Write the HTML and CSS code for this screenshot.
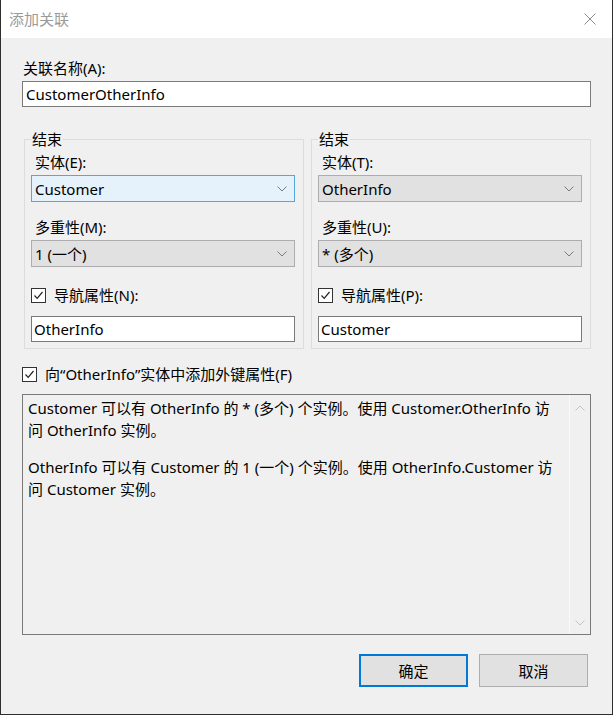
FILE: index.html
```html
<!DOCTYPE html>
<html lang="zh-CN">
<head>
<meta charset="utf-8">
<title>添加关联</title>
<link rel="stylesheet" href="styles.css">
</head>
<body>
<div class="window">
  <div class="titlebar">
    <span class="title">添加关联</span>
    <svg class="close" width="12" height="12" viewBox="0 0 12 12"><path d="M0.5 0.5 L11.5 11.5 M11.5 0.5 L0.5 11.5" stroke="#8c8c8c" stroke-width="1" fill="none"/></svg>
  </div>
  <div class="body">
    <div class="lbl lbl-top">关联名称(A):</div>
    <div class="textbox">CustomerOtherInfo</div>

    <div class="ends">
      <fieldset class="group">
        <legend>结束</legend>
        <div class="lbl">实体(E):</div>
        <div class="combo focused"><span>Customer</span><svg class="chev" width="10" height="6" viewBox="0 0 10 6"><path d="M0.5 0.5 L5 5 L9.5 0.5" stroke="#7a7a7a" fill="none"/></svg></div>
        <div class="lbl lbl-gap">多重性(M):</div>
        <div class="combo"><span>1 (一个)</span><svg class="chev" width="10" height="6" viewBox="0 0 10 6"><path d="M0.5 0.5 L5 5 L9.5 0.5" stroke="#7a7a7a" fill="none"/></svg></div>
        <div class="check check-nav"><span class="box"><svg width="11" height="11" viewBox="0 0 11 11"><path d="M1.5 5.5 L4.2 8.3 L9.5 2" stroke="#222" stroke-width="1.2" fill="none"/></svg></span><span>导航属性(N):</span></div>
        <div class="textbox small">OtherInfo</div>
      </fieldset>
      <fieldset class="group">
        <legend>结束</legend>
        <div class="lbl">实体(T):</div>
        <div class="combo"><span>OtherInfo</span><svg class="chev" width="10" height="6" viewBox="0 0 10 6"><path d="M0.5 0.5 L5 5 L9.5 0.5" stroke="#7a7a7a" fill="none"/></svg></div>
        <div class="lbl lbl-gap">多重性(U):</div>
        <div class="combo"><span>* (多个)</span><svg class="chev" width="10" height="6" viewBox="0 0 10 6"><path d="M0.5 0.5 L5 5 L9.5 0.5" stroke="#7a7a7a" fill="none"/></svg></div>
        <div class="check check-nav"><span class="box"><svg width="11" height="11" viewBox="0 0 11 11"><path d="M1.5 5.5 L4.2 8.3 L9.5 2" stroke="#222" stroke-width="1.2" fill="none"/></svg></span><span>导航属性(P):</span></div>
        <div class="textbox small">Customer</div>
      </fieldset>
    </div>

    <div class="check check-fk"><span class="box"><svg width="11" height="11" viewBox="0 0 11 11"><path d="M1.5 5.5 L4.2 8.3 L9.5 2" stroke="#222" stroke-width="1.2" fill="none"/></svg></span><span>向“OtherInfo”实体中添加外键属性(F)</span></div>

    <div class="desc">
      <div class="desc-text">
        <p>Customer 可以有 OtherInfo 的 * (多个) 个实例。使用 Customer.OtherInfo 访<br>问 OtherInfo 实例。</p>
        <p>OtherInfo 可以有 Customer 的 1 (一个) 个实例。使用 OtherInfo.Customer 访<br>问 Customer 实例。</p>
      </div>
      <div class="scroll">
        <svg width="10" height="6" viewBox="0 0 10 6"><path d="M0.5 5.5 L5 1 L9.5 5.5" stroke="#c4c4c4" fill="none"/></svg>
        <svg width="10" height="6" viewBox="0 0 10 6"><path d="M0.5 0.5 L5 5 L9.5 0.5" stroke="#c4c4c4" fill="none"/></svg>
      </div>
    </div>

    <div class="buttons">
      <button class="btn default">确定</button>
      <button class="btn">取消</button>
    </div>
  </div>
</div>
</body>
</html>
```

FILE: styles.css
```css
* { box-sizing: border-box; }

html, body {
  margin: 0;
  padding: 0;
  background: #f0f0f0;
}

body {
  font-family: "Noto Sans", "Noto Sans CJK SC", sans-serif;
  font-size: 15px;
  color: #000;
}

.window {
  width: 613px;
  height: 715px;
  display: flex;
  flex-direction: column;
  border-left: 1px solid #2e2e2e;
  border-right: 1px solid #2e2e2e;
  border-bottom: 1px solid #2e2e2e;
  background: #f0f0f0;
}

.titlebar {
  height: 38px;
  flex: none;
  background: #fff;
  display: flex;
  align-items: center;
  justify-content: space-between;
  padding: 0 16px 0 8px;
}

.title {
  font-size: 15px;
  color: #9a9a9a;
  line-height: 20px;
}

.close { display: block; }

.body {
  flex: 1;
  display: flex;
  flex-direction: column;
  padding: 20px 21px 0 21px;
}

.lbl {
  font-size: 15px;
  line-height: 20px;
  height: 20px;
  margin-left: 4px;
}

.lbl-top {
  margin-left: 1px;
  margin-bottom: 3px;
}

.textbox {
  height: 26px;
  border: 1px solid #7a7a7a;
  background: #fff;
  line-height: 24px;
  padding-left: 3px;
  font-size: 15px;
  white-space: nowrap;
}

.textbox.small {
  margin-top: 11px;
  padding-left: 2px;
}

.ends {
  margin-top: 22px;
  padding-left: 2px;
  display: grid;
  grid-template-columns: 1fr 1fr;
  column-gap: 7px;
}

.group {
  margin: 0;
  min-width: 0;
  border: 1px solid #dcdcdc;
  padding: 3px 8px 6px 6px;
  display: flex;
  flex-direction: column;
}

.group legend {
  font-size: 15px;
  line-height: 20px;
  padding: 0 1px;
  margin-left: 0;
}

.lbl + .combo { margin-top: 3px; }
.lbl-gap { margin-top: 15px; }

.combo {
  height: 27px;
  border: 1px solid #adadad;
  background: #e1e1e1;
  display: flex;
  align-items: center;
  justify-content: space-between;
  padding: 0 7px 0 3px;
  font-size: 15px;
}

.combo.focused {
  background: #e5f1fb;
  border-color: #56a8dc;
}

.chev { display: block; flex: none; }

.check {
  display: flex;
  align-items: center;
  height: 20px;
  line-height: 20px;
  font-size: 15px;
}

.box {
  width: 15px;
  height: 15px;
  border: 1px solid #333;
  background: #fff;
  display: flex;
  align-items: center;
  justify-content: center;
  margin-right: 8px;
  flex: none;
}

.box svg { display: block; }

.check-nav { margin-top: 18px; }

.check-fk {
  margin-top: 15px;
  margin-left: 0;
}

.desc {
  margin-top: 10px;
  height: 241px;
  border: 1px solid #7a7a7a;
  background: #f0f0f0;
  display: flex;
}

.desc-text {
  flex: 1;
  padding: 2px 4px 0 5px;
  font-size: 15px;
  line-height: 22px;
  white-space: nowrap;
}

.desc-text p { margin: 0; }
.desc-text p + p { margin-top: 15px; }

.scroll {
  width: 21px;
  flex: none;
  border-left: 1px solid #fafafa;
  display: flex;
  flex-direction: column;
  justify-content: space-between;
  align-items: center;
  padding: 10px 0 8px;
}

.scroll svg { display: block; }

.buttons {
  margin-top: 19px;
  display: flex;
  justify-content: flex-end;
  gap: 11px;
  padding-right: 3px;
}

.btn {
  width: 109px;
  height: 33px;
  border: 1px solid #adadad;
  background: #e1e1e1;
  font-family: "Noto Sans", "Noto Sans CJK SC", sans-serif;
  font-size: 15px;
  color: #000;
  padding: 0;
  margin: 0;
}

.btn.default {
  border: 2px solid #0078d7;
}
```
